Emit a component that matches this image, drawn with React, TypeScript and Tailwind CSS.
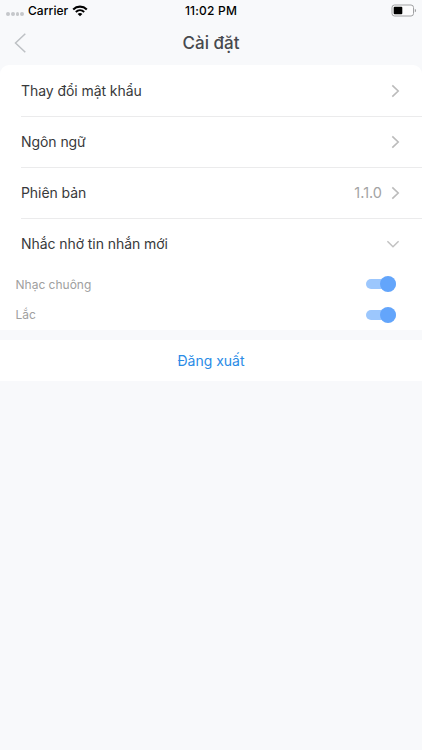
import type { ReactNode } from "react";

function StatusBar() {
  return (
    <div className="grid h-[21px] grid-cols-3 items-center text-[12px] leading-[21px] font-medium text-black">
      <div className="flex items-center pl-[6px]">
        <div className="mt-[7px] flex gap-px">
          {[0, 1, 2, 3].map((i) => (
            <span key={i} className="size-[3.75px] rounded-full bg-[#c5c7ca]" />
          ))}
        </div>
        <span className="ml-[4px] tracking-[0.05px]">Carrier</span>
        <svg className="ml-[4px]" width="16" height="12" viewBox="0 0 16 12" fill="none">
          <path d="M1.2 4.4C5 .7 11 .7 14.8 4.4" stroke="#000" strokeWidth="2.1" />
          <path d="M3.8 7C6.2 4.7 9.8 4.7 12.2 7" stroke="#000" strokeWidth="1.9" />
          <path d="M5.6 8.9C7 7.6 9 7.6 10.4 8.9L8 11.3Z" fill="#000" />
        </svg>
      </div>
      <span className="text-center tracking-[0.2px]">11:02 PM</span>
      <div className="flex justify-end pr-[5px]">
        <svg width="26" height="13" viewBox="0 0 26 13" fill="none">
          <rect x="1" y="1" width="21.5" height="11" rx="2.5" stroke="#a0a1a3" fill="#fcfcfd" />
          <rect x="2.7" y="2.7" width="8.6" height="7.6" rx="1" fill="#000" />
          <path d="M23.8 4.7C25.5 5.2 25.5 7.8 23.8 8.3Z" fill="#a0a1a3" />
        </svg>
      </div>
    </div>
  );
}

function ChevronRight() {
  return (
    <svg width="9" height="14" viewBox="0 0 9 14" fill="none">
      <path d="M1.3 1.4L7.2 7L1.3 12.6" stroke="#bbb" strokeWidth="1.6" />
    </svg>
  );
}

function ChevronDown() {
  return (
    <svg width="14" height="9" viewBox="0 0 14 9" fill="none">
      <path d="M1.4 1.3L7 6.7L12.6 1.3" stroke="#c2c2c2" strokeWidth="1.5" />
    </svg>
  );
}

function Row({ label, children, last = false }: { label: string; children: ReactNode; last?: boolean }) {
  return (
    <div
      className={`ml-[21px] flex items-center justify-between pr-[22px] text-[14px] text-[#38393b] ${
        last ? "h-[50px]" : "h-[51px] border-b-[1.5px] border-[#ebebec]"
      }`}
    >
      <span className="pb-[2px] tracking-[-0.07px]">{label}</span>
      <span className="flex items-center gap-[9px]">{children}</span>
    </div>
  );
}

function ToggleRow({ label }: { label: string }) {
  return (
    <div className="flex h-[30.5px] items-center justify-between pr-[26px] pl-[15.5px] text-[12px] text-[#a0a0a0]">
      <span className="pt-px">{label}</span>
      <span className="flex h-[10px] w-[30px] items-center justify-end rounded-full bg-[#9cc7fd]">
        <span className="size-[16px] rounded-full bg-[#63a5fb]" />
      </span>
    </div>
  );
}

export default function App() {
  return (
    <div className="h-[750px] w-full overflow-hidden bg-[#f8f9fb] font-['Inter','Liberation_Sans',sans-serif]">
      <StatusBar />
      <header className="grid h-[44px] grid-cols-[40px_1fr_40px] items-center">
        <svg className="ml-[13px]" width="14" height="22" viewBox="0 0 14 22" fill="none">
          <path d="M12.3 1.7L2.5 11L12.3 20.3" stroke="#bdc0c4" strokeWidth="1.5" />
        </svg>
        <h1 className="pt-[2px] text-center text-[17px] font-medium text-[#47494d]">Cài đặt</h1>
      </header>
      <section className="h-[265px] rounded-t-[9px] bg-white pt-px">
        <Row label="Thay đổi mật khẩu">
          <ChevronRight />
        </Row>
        <Row label="Ngôn ngữ">
          <ChevronRight />
        </Row>
        <Row label="Phiên bản">
          <span className="text-[14.5px] text-[#a3a3a3]">1.1.0</span>
          <ChevronRight />
        </Row>
        <Row label="Nhắc nhở tin nhắn mới" last>
          <ChevronDown />
        </Row>
        <ToggleRow label="Nhạc chuông" />
        <ToggleRow label="Lắc" />
      </section>
      <button className="mt-[10px] flex h-[41px] w-full items-center justify-center bg-white text-[14px] text-[#2a8be6]">
        Đăng xuất
      </button>
    </div>
  );
}
